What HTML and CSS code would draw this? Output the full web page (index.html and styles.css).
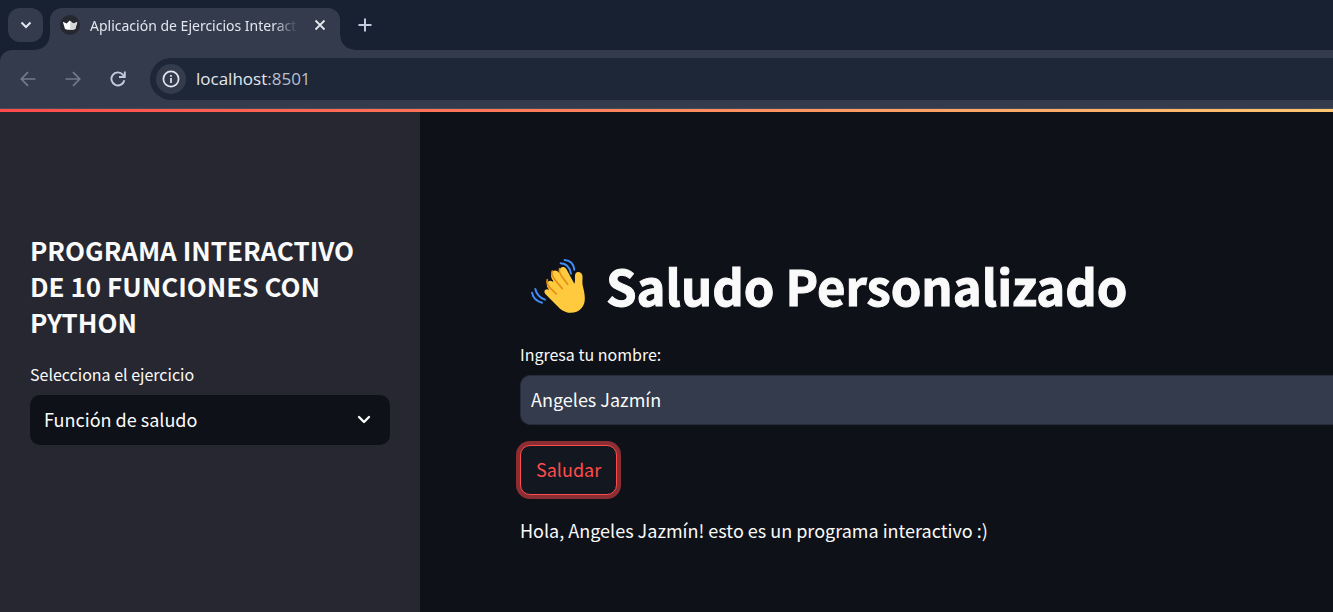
FILE: index.html
```html
<!DOCTYPE html>
<html lang="es">
<head>
<meta charset="utf-8">
<title>Aplicación de Ejercicios Interactivos</title>
<link rel="stylesheet" href="styles.css">
</head>
<body>
<header class="browser">
  <div class="tab-strip">
    <button class="tab-search" aria-label="Buscar pestañas">
      <svg width="12" height="12" viewBox="0 0 12 12"><path d="M1.500 3.500l4.500 4.500 4.500-4.500" fill="none" stroke="#e3e6ee" stroke-width="2"/></svg>
    </button>
    <div class="tab">
      <svg class="favicon" width="20" height="20" viewBox="0 0 20 20"><circle cx="10" cy="10" r="10" fill="#262730"/><path d="M2.800 6.800l3.900 1.700L9.700 5.600l3.600 2.900 4-1.500-2 6.900q-5.300 1.800-10.300 0z" fill="#fff"/><path d="M10 6l3.300 2.500 4-1.500-2 6.900q-2.500.9-5 .9z" fill="#d4d5d8"/></svg>
      <span class="tab-title">Aplicación de Ejercicios Interacti</span>
      <button class="icon-button" aria-label="Cerrar">
        <svg width="12" height="12" viewBox="0 0 12 12"><path d="M1.500 1.500l9 9M10.500 1.500l-9 9" stroke="#e6e8ee" stroke-width="1.800"/></svg>
      </button>
    </div>
    <button class="icon-button new-tab" aria-label="Nueva pestaña">
      <svg width="14" height="14" viewBox="0 0 14 14"><path d="M7 .5v13M.5 7h13" stroke="#c3cae0" stroke-width="2"/></svg>
    </button>
  </div>
  <div class="toolbar">
    <nav class="nav-buttons">
      <button class="icon-button" aria-label="Atrás">
        <svg width="16" height="16" viewBox="0 0 16 16"><path d="M15.500 8H1.500M8 1.200L1.300 8 8 14.800" fill="none" stroke="#737a89" stroke-width="1.700"/></svg>
      </button>
      <button class="icon-button" aria-label="Adelante">
        <svg width="16" height="16" viewBox="0 0 16 16"><path d="M.5 8h14M8 1.200L14.700 8 8 14.800" fill="none" stroke="#737a89" stroke-width="1.700"/></svg>
      </button>
      <button class="icon-button" aria-label="Recargar">
        <svg width="16" height="16" viewBox="0 0 16 16"><path d="M14.300 9.200A6.500 6.500 0 1 1 12.800 3.600L14.600 5.400M14.800.5v5.500H9" fill="none" stroke="#c3cae0" stroke-width="1.900"/></svg>
      </button>
    </nav>
    <div class="address-bar">
      <button class="site-info" aria-label="Información del sitio">
        <svg width="18" height="18" viewBox="0 0 18 18"><circle cx="9" cy="9" r="7.600" fill="none" stroke="#e3e6ee" stroke-width="1.700"/><path d="M9 8v5M9 5v1.800" stroke="#e3e6ee" stroke-width="1.700"/></svg>
      </button>
      <span class="url">localhost<span class="port">:8501</span></span>
    </div>
  </div>
</header>
<div class="decoration"></div>
<div class="app">
  <aside class="sidebar">
    <h2 class="sidebar-title">PROGRAMA INTERACTIVO DE 10 FUNCIONES CON PYTHON</h2>
    <label class="label" for="exercise">Selecciona el ejercicio</label>
    <div class="select-box">
      <select class="select" id="exercise"><option>Función de saludo</option></select>
      <svg class="select-arrow" width="14" height="10" viewBox="0 0 14 10"><path d="M2 2l5 5 5-5" fill="none" stroke="#fafafa" stroke-width="2.400" stroke-linecap="round" stroke-linejoin="round"/></svg>
    </div>
  </aside>
  <main class="main">
    <h1 class="title">
      <svg class="wave" width="56" height="56" viewBox="30 26 168 168" role="img" aria-label="Mano saludando">
        <g fill="none" stroke="#428df7" stroke-width="6" stroke-linecap="round"><path d="M134 32q26 2 29 29M122 42q25 1 31 31M46 119q5 23 29 32M36 130q5 24 30 30"/></g>
        <path d="M76 134c-8-10 3-19 12-11l-3-5c-12-15 2-31 13-21l2-2c-14-17-4-33 8-31 4 0 7 3 10 7-2-18 13-23 21-12l24 44c4-9 0-21 3-29 4-9 18-7 21 4 2 8-2 21 2 34 5 20 11 47-4 64-17 19-45 19-65 2z" fill="#ffca3d"/>
        <g fill="none" stroke="#e48c15" stroke-width="5" stroke-linecap="round" stroke-linejoin="round"><path d="M97 65c-5 9 1 17 8 26l22 27M119 58c-4 8 2 17 7 24l17 23M82 91c-3 9 1 16 7 23l20 20"/></g>
      </svg>
      <span>Saludo Personalizado</span>
    </h1>
    <label class="label" for="name">Ingresa tu nombre:</label>
    <input class="text-input" id="name" type="text" value="Angeles Jazmín">
    <button class="greet">Saludar</button>
    <p class="greeting">Hola, Angeles Jazmín! esto es un programa interactivo :)</p>
  </main>
</div>
</body>
</html>
```
FILE: styles.css
```css
* { box-sizing: border-box; }

body {
  margin: 0;
  min-height: 100vh;
  display: flex;
  flex-direction: column;
  background: #0e1117;
  color: #fafafa;
  font-family: "Noto Sans CJK JP", "Noto Sans", sans-serif;
  font-size: 18px;
}

button, input, select { font: inherit; color: inherit; }
button { padding: 0; border: 0; background: none; }
svg { display: block; flex: none; }

.browser {
  background: #182131;
  font-family: "Noto Sans", sans-serif;
}

.tab-strip {
  display: flex;
  height: 50px;
  padding: 8px 8px 0;
}

.tab-search {
  display: grid;
  place-items: center;
  width: 35px;
  height: 34px;
  margin-right: 7px;
  border-radius: 12px;
  background: #333b4c;
}

.tab {
  position: relative;
  display: flex;
  align-items: center;
  width: 290px;
  padding: 0 10px 8px;
  border-radius: 12px 12px 0 0;
  background: #333b4c;
}

.tab::before, .tab::after {
  content: "";
  position: absolute;
  bottom: 0;
  width: 14px;
  height: 14px;
}
.tab::before {
  right: 100%;
  background: radial-gradient(circle at 0 0, transparent 13px, #333b4c 14px);
}
.tab::after {
  left: 100%;
  background: radial-gradient(circle at 100% 0, transparent 13px, #333b4c 14px);
}

.tab-title {
  flex: 1;
  margin-left: 10px;
  overflow: hidden;
  white-space: nowrap;
  font-size: 14px;
  color: #e3e6ee;
  mask-image: linear-gradient(90deg, #000 88%, transparent 100%);
}

.icon-button {
  display: grid;
  place-items: center;
  width: 20px;
  height: 34px;
}
.tab .icon-button { margin-left: 12px; }
.new-tab { margin-left: 15px; }

.toolbar {
  display: flex;
  align-items: center;
  height: 59px;
  padding: 0 0 1px 18px;
  border-bottom: 1px solid #454b58;
  border-radius: 12px 0 0 0;
  background: #333b4c;
}

.nav-buttons { display: flex; gap: 25px; }

.address-bar {
  flex: 1;
  display: flex;
  align-items: center;
  gap: 10px;
  height: 42px;
  margin-left: 22px;
  padding-left: 6px;
  border-radius: 21px 0 0 21px;
  background: #1e2737;
}

.site-info {
  display: grid;
  place-items: center;
  width: 30px;
  height: 30px;
  border-radius: 50%;
  background: #333b4c;
}

.url { font-family: "Open Sans", sans-serif; font-size: 17px; color: #e3e6ee; }
.port { color: #b9bfcb; }

.decoration {
  height: 3px;
  background: linear-gradient(90deg, #ff4b4b, #ffc670);
}

.app { flex: 1; display: flex; }

.sidebar {
  flex: none;
  width: 420px;
  padding: 120px 30px 0;
  background: #262730;
}

.sidebar-title {
  margin: 0 0 21px;
  font-size: 26px;
  font-weight: 600;
  line-height: 36px;
}

.label {
  display: block;
  margin-bottom: 8px;
  font-size: 16px;
  line-height: 26px;
}

.select-box { position: relative; }

.select {
  appearance: none;
  display: block;
  width: 100%;
  height: 50px;
  padding: 0 14px 2px;
  border: 0;
  border-radius: 10px;
  background: #0e1117;
}

.select-arrow {
  position: absolute;
  top: 20px;
  right: 19px;
  pointer-events: none;
}

.main {
  flex: 1;
  min-width: 0;
  padding: 141px 0 0 100px;
}

.title {
  display: flex;
  align-items: center;
  gap: 20px;
  margin: 0 0 22px;
  padding-left: 10px;
  font-size: 49px;
  font-weight: 700;
  line-height: 66px;
  white-space: nowrap;
  -webkit-text-stroke: 1px #fafafa;
}

.title span { padding-bottom: 2px; line-height: 64px; }

.text-input {
  display: block;
  width: 100%;
  height: 50px;
  padding: 0 10px 2px;
  border: 1px solid #262c3a;
  border-right: 0;
  border-radius: 10px 0 0 10px;
  background: #333b4c;
  outline: 0;
}

.greet {
  display: block;
  height: 50px;
  margin: 20px 0 19px;
  padding: 0 15px 2px;
  border: 1px solid #ff4b4b;
  border-radius: 10px;
  background: #131720;
  box-shadow: 0 0 0 4px #8b2e33;
  color: #ff4b4b;
}

.greeting {
  margin: 0;
  line-height: 32px;
}
```
